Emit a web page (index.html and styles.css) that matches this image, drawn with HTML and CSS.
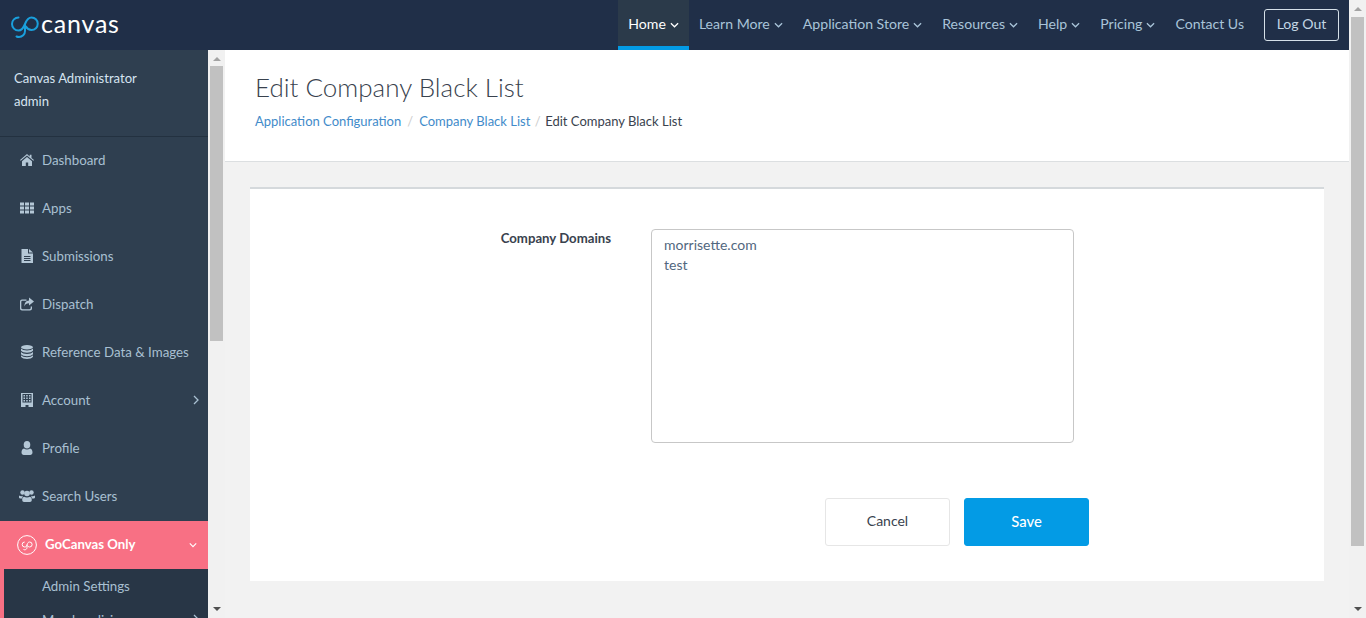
FILE: index.html
```html
<!DOCTYPE html>
<html lang="en">
<head>
<meta charset="utf-8">
<title>Edit Company Black List</title>
<link rel="stylesheet" href="styles.css">
</head>
<body>
<div class="window">
  <div class="page">
    <header class="topbar">
      <a class="logo">
        <svg class="logo-go" viewBox="0 0 29 28" width="29" height="28"><path d="M7.500 6.500a6.500 6.500 0 1 0 0 13c3.500 0 5-2.800 6.500-6.500s3-6.500 6.500-6.500a6 6 0 0 1 0 12.500c-2.800 0-4.500-1.600-5.500-3.500M14 13.500v6.500c0 3.500-2.800 6-6 6-1 0-1.800-.2-2.500-.5" fill="none" stroke="#1a9fdc" stroke-width="2" stroke-linecap="round"/></svg>
        <span class="logo-text">canvas</span>
      </a>
      <nav class="topnav">
        <a class="topnav-item active">Home <svg class="caret" viewBox="0 0 10 6"><path d="M1 1l4 4 4-4"/></svg></a>
        <a class="topnav-item">Learn More <svg class="caret" viewBox="0 0 10 6"><path d="M1 1l4 4 4-4"/></svg></a>
        <a class="topnav-item">Application Store <svg class="caret" viewBox="0 0 10 6"><path d="M1 1l4 4 4-4"/></svg></a>
        <a class="topnav-item">Resources <svg class="caret" viewBox="0 0 10 6"><path d="M1 1l4 4 4-4"/></svg></a>
        <a class="topnav-item">Help <svg class="caret" viewBox="0 0 10 6"><path d="M1 1l4 4 4-4"/></svg></a>
        <a class="topnav-item">Pricing <svg class="caret" viewBox="0 0 10 6"><path d="M1 1l4 4 4-4"/></svg></a>
        <a class="topnav-item">Contact Us</a>
        <a class="logout">Log Out</a>
      </nav>
    </header>
    <div class="below">
      <aside class="sidebar">
        <div class="user"><div>Canvas Administrator</div><div>admin</div></div>
        <ul class="menu">
          <li class="menu-item"><svg class="ico" viewBox="0 0 14 12"><path d="M7 0L0 6l.7.800L7 1.500l6.300 5.300.7-.8-2.500-2.100V.7h-1.800v1.900zM2 7.300V12h3.800V8.500h2.400V12H12V7.300L7 3z"/></svg><span>Dashboard</span></li>
          <li class="menu-item"><svg class="ico" viewBox="0 0 14 11"><path d="M0 0h4v3H0zM5 0h4v3H5zM10 0h4v3h-4zM0 4h4v3H0zM5 4h4v3H5zM10 4h4v3h-4zM0 8h4v3H0zM5 8h4v3H5zM10 8h4v3h-4z"/></svg><span>Apps</span></li>
          <li class="menu-item"><svg class="ico" viewBox="0 0 13 14"><path fill-rule="evenodd" d="M1 0h6.500v4.500H12.500V14H1zM8.500 0l4 3.500h-4zM3.500 7v1h6.500V7zM3.500 9v1h6.500V9zM3.500 11v1h6.500v-1z"/></svg><span>Submissions</span></li>
          <li class="menu-item"><svg class="ico" viewBox="0 0 14 13"><path fill-rule="evenodd" d="M9 0l5 4-5 4V5.700C6.500 5.700 5 6.500 4.500 9c-.3-3.500 1.500-5.700 4.500-6zM2 2h4.500v1.200H2.500c-.7 0-1.200.5-1.200 1.200v6.200c0 .7.500 1.200 1.200 1.200h7c.7 0 1.200-.5 1.200-1.200V9H12v2c0 1.100-.9 2-2 2H2c-1.100 0-2-.9-2-2V4c0-1.100.9-2 2-2z"/></svg><span>Dispatch</span></li>
          <li class="menu-item"><svg class="ico" viewBox="0 0 12 14"><ellipse cx="6" cy="2.200" rx="6" ry="2.200"/><path d="M0 3.500c1 1.300 3.500 1.900 6 1.900s5-.6 6-1.900v2.300c-1 1.300-3.500 1.900-6 1.900S1 7.100 0 5.800zM0 7c1 1.300 3.500 1.900 6 1.900S11 8.300 12 7v2.300c-1 1.300-3.500 1.900-6 1.900S1 10.600 0 9.300zM0 10.300c1 1.300 3.500 1.900 6 1.900s5-.6 6-1.900v1.500C11 13.300 8.500 14 6 14s-5-.7-6-2.200z"/></svg><span>Reference Data &amp; Images</span></li>
          <li class="menu-item"><svg class="ico" viewBox="0 0 12 14"><path fill-rule="evenodd" d="M0 0h12v14H7.500v-2h-3v2H0zM1.500 1v8.500h9V1zM2.500 2h1.500v1.500H2.500zM5.200 2h1.500v1.500H5.200zM8 2h1.500v1.500H8zM2.500 4.500h1.500V6H2.500zM5.200 4.500h1.500V6H5.200zM8 4.500h1.500V6H8zM2.500 7h1.500v1.500H2.500zM5.200 7h1.500v1.500H5.200zM8 7h1.500v1.500H8z"/></svg><span>Account</span><svg class="chev" viewBox="0 0 6 10"><path d="M1 1l4 4-4 4"/></svg></li>
          <li class="menu-item"><svg class="ico" viewBox="0 0 12 14"><ellipse cx="6" cy="3.800" rx="3.300" ry="3.800"/><path d="M3 7.500c1.700 1.200 4.300 1.200 6 0 1.700.3 2.500 1.700 2.500 4 0 1.500-1 2.500-2.300 2.500H2.800C1.500 14 .5 13 .5 11.500c0-2.300.8-3.700 2.500-4z"/></svg><span>Profile</span></li>
          <li class="menu-item"><svg class="ico ico-wide" viewBox="0 0 16 12"><circle cx="3.500" cy="2.500" r="2.200"/><circle cx="12.500" cy="2.500" r="2.200"/><circle cx="8" cy="3.500" r="2.800"/><path d="M0 5.500c.8.700 3 .9 4 .3-.5 1-.8 1.600-.8 2.700H1C.3 8.500 0 8 0 7.300zM16 5.500c-.8.700-3 .9-4 .3.500 1 .8 1.600.8 2.700H15c.7 0 1-.5 1-1.200zM5 6.700c1.600 1 4.400 1 6 0 1.300.5 1.800 1.800 1.800 3.300 0 1.200-.8 2-1.800 2H5c-1 0-1.800-.8-1.800-2 0-1.500.5-2.800 1.800-3.300z"/></svg><span>Search Users</span></li>
          <li class="menu-item special">
            <svg class="badge" viewBox="0 0 20 20"><circle cx="10" cy="10" r="9.400"/><path d="M7.700 7a2.500 2.500 0 1 0 0 5c1.500 0 2-1 2.500-2.500s1-2.500 2.400-2.500a2.500 2.500 0 0 1 0 5c-1.100 0-1.800-.6-2.200-1.400M10 9.500v3c0 1.300-1 2.300-2.300 2.300-.5 0-.9-.1-1.200-.3"/></svg>
            <span>GoCanvas Only</span>
            <svg class="chev-down" viewBox="0 0 10 6"><path d="M1 1l4 4 4-4"/></svg>
          </li>
          <li class="submenu">
            <a class="submenu-item">Admin Settings</a>
            <a class="submenu-item">Merchandising<svg class="chev" viewBox="0 0 6 10"><path d="M1 1l4 4-4 4"/></svg></a>
          </li>
        </ul>
      </aside>
      <div class="side-scroll">
        <span class="arrow-up"></span>
        <span class="thumb"></span>
        <span class="arrow-down"></span>
      </div>
      <main class="main">
        <section class="page-head">
          <h1>Edit Company Black List</h1>
          <ol class="crumbs">
            <li><a>Application Configuration</a></li>
            <li class="sep sep-wide">/</li>
            <li><a>Company Black List</a></li>
            <li class="sep">/</li>
            <li>Edit Company Black List</li>
          </ol>
        </section>
        <section class="card">
          <form class="form">
            <div class="form-row">
              <label class="form-label" for="domains">Company Domains</label>
              <textarea id="domains" class="form-area" spellcheck="false">morrisette.com
test</textarea>
            </div>
            <div class="form-actions">
              <button type="button" class="btn">Cancel</button>
              <button type="button" class="btn btn-primary">Save</button>
            </div>
          </form>
        </section>
      </main>
    </div>
  </div>
  <div class="win-scroll">
    <span class="arrow-up"></span>
    <span class="thumb"></span>
    <span class="arrow-down"></span>
  </div>
</div>
</body>
</html>
```

FILE: styles.css
```css
* { box-sizing: border-box; }
html, body { margin: 0; height: 100%; overflow: hidden; }
body { font-family: "Lato", "Liberation Sans", sans-serif; font-size: 14px; color: #39424e; background: #f2f2f2; }
ul, ol { list-style: none; margin: 0; padding: 0; }

.window { display: flex; height: 618px; }
.page { flex: 1; min-width: 0; display: flex; flex-direction: column; }

.topbar { height: 50px; flex: none; display: flex; justify-content: space-between; background: #202f48; }
.logo { display: flex; align-items: center; padding-left: 11px; gap: 1px; }
.logo-go { flex: none; }
.logo-text { font-size: 25px; font-weight: 400; color: #fff; letter-spacing: .800px; line-height: 1; margin-bottom: 3px; }
.topnav { display: flex; align-items: stretch; padding-right: 10px; }
.topnav-item { display: flex; align-items: center; gap: 4px; padding: 0 10px 3px; font-size: 14.100px; color: #a9c4d9; }
.topnav-item.active { background: #2b3a4a; color: #fff; box-shadow: inset 0 -4px 0 #039be5; }
.caret { width: 9px; height: 6px; fill: none; stroke: currentColor; stroke-width: 1.400; margin-top: 2px; }
.logout { align-self: center; width: 75px; height: 32px; margin-left: 10px; padding-bottom: 3px; display: flex; align-items: center; justify-content: center; border: 1px solid #d5e0e8; border-radius: 3px; font-size: 14.100px; color: #c3d6e4; }

.below { flex: 1; min-height: 0; display: flex; }
.sidebar { width: 208px; flex: none; background: #2f3f50; overflow: hidden; font-size: 13.300px; color: #a9c0d2; }
.user { height: 87px; padding: 17px 14px 0; border-bottom: 1px solid #233140; color: #d6e4f0; line-height: 23px; font-size: 13.100px; }
.menu-item { height: 48px; display: flex; align-items: center; padding: 0 0 2px 20px; position: relative; }
.ico { width: 14px; height: 14px; margin-right: 8px; fill: #b4c7d6; flex: none; }
.ico-wide { width: 16px; margin-left: -1px; margin-right: 7px; }
.chev { width: 6px; height: 10px; fill: none; stroke: currentColor; stroke-width: 1.300; position: absolute; right: 9px; top: 50%; margin-top: -6px; }
.special { background: #f87084; color: #fff; font-weight: 700; font-size: 13.200px; padding-left: 17px; }
.badge { width: 20px; height: 20px; margin-right: 8px; fill: none; stroke: #fff; stroke-width: 1; flex: none; margin-top: 2px; }
.chev-down { width: 8px; height: 6px; fill: none; stroke: #fff; stroke-width: 1.400; position: absolute; right: 11px; top: 21px; }
.submenu { background: #283646; border-left: 4px solid #f87084; }
.submenu-item { height: 34px; display: flex; align-items: center; padding: 0 0 1px 38px; position: relative; }

.side-scroll, .win-scroll { width: 17px; flex: none; display: flex; flex-direction: column; align-items: center; background: #f1f1f1; }
.thumb { width: 13px; background: #c1c1c1; }
.side-scroll .thumb { height: 275px; margin-top: 5px; }
.win-scroll .thumb { height: 529px; margin-top: 6px; }
.arrow-up, .arrow-down { width: 0; height: 0; border-left: 4px solid transparent; border-right: 4px solid transparent; flex: none; }
.arrow-up { margin-top: 7px; border-bottom: 4px solid #a3a3a3; }
.arrow-down { margin-top: auto; margin-bottom: 7px; border-top: 4px solid #505050; }

.main { flex: 1; min-width: 0; }
.page-head { height: 112px; padding: 21px 30px 0; background: #fff; border-bottom: 1px solid #dcdfe1; }
.page-head h1 { margin: 0; font-size: 26px; font-weight: 300; line-height: 33px; color: #39424e; }
.crumbs { display: flex; margin-top: 7px; font-size: 13px; line-height: 20px; color: #39424e; }
.crumbs a { color: #428bca; }
.sep { color: #ccc; padding: 0 4.500px; }
.sep-wide { padding: 0 6px; }
.card { margin: 25px 25px 0; height: 394px; background: #fff; border-top: 2px solid #d5d9dc; }
.form { display: flex; flex-direction: column; height: 100%; }
.form-row { display: flex; padding-top: 40px; }
.form-label { width: 361px; text-align: right; font-size: 13.200px; font-weight: 700; color: #39424e; line-height: 18px; }
.form-area { display: block; width: 423px; height: 214px; margin-left: 40px; padding: 5px 12px; border: 1px solid #c7c7c7; border-radius: 4px; background: #fff; font: 14px/20px "Lato", "Liberation Sans", sans-serif; color: #52677e; resize: none; outline: none; }
.form-actions { display: flex; gap: 14px; padding: 55px 0 0 575px; }
.btn { width: 125px; height: 48px; padding: 0 0 4px; border: 1px solid #e6e6e6; border-radius: 3px; background: #fff; font: 14px "Lato", "Liberation Sans", sans-serif; color: #39424e; }
.btn-primary { padding-bottom: 3px; background: #039be5; border-color: #039be5; color: #fff; font-weight: 500; font-size: 14.800px; }
```
